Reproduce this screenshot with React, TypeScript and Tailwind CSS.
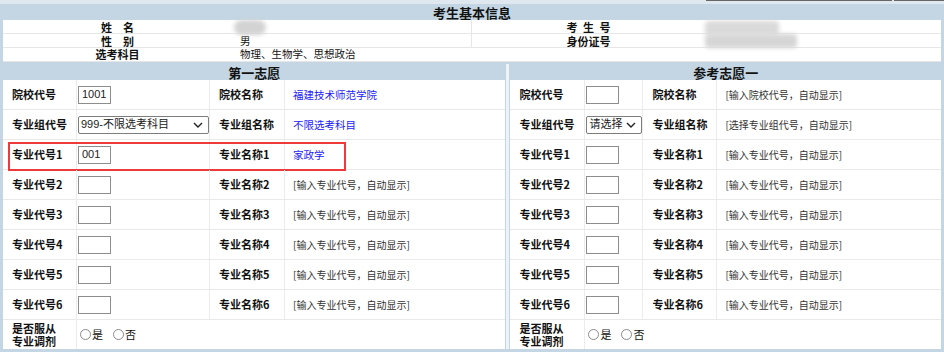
import type { ReactNode } from "react";

type Row = { label: string; field: ReactNode; label2: string; value: ReactNode; mark?: boolean };

function Box({ value }: { value?: string }) {
  return (
    <div className="ml-px flex h-[18px] w-[33px] items-center border border-[#8d8d8d] bg-white pl-[3px] font-['Liberation_Sans',sans-serif] text-[11px] text-[#222]">
      {value}
    </div>
  );
}

function Select({ text, w }: { text: string; w: string }) {
  return (
    <div className={`ml-px flex h-[18px] items-center justify-between rounded-[2px] border border-[#7d7d7d] bg-white pl-[2px] pr-[5px] text-[11px] text-[#222] ${w}`}>
      <span className="font-['Liberation_Sans','Noto_Sans_CJK_SC',sans-serif]">{text}</span>
      <svg width="10" height="6" viewBox="0 0 10 6">
        <path d="M1 1 L5 5 L9 1" fill="none" stroke="#222" strokeWidth="1.4" />
      </svg>
    </div>
  );
}

const Blue = ({ children }: { children: ReactNode }) => <span className="text-[10.5px] text-[#1a1aff]">{children}</span>;
const Hint = ({ children }: { children: ReactNode }) => <span className="text-[10px] text-[#333]">{children}</span>;

function Radio({ label }: { label: string }) {
  return (
    <span className="flex items-center">
      <span className="h-[11px] w-[11px] rounded-full border border-[#8a8a8a] bg-white" />
      <span className="ml-px text-[11px] leading-none">{label}</span>
    </span>
  );
}

const majors = [2, 3, 4, 5, 6];

const leftRows: Row[] = [
  { label: "院校代号", field: <Box value="1001" />, label2: "院校名称", value: <Blue>福建技术师范学院</Blue> },
  { label: "专业组代号", field: <Select text="999-不限选考科目" w="w-[131px]" />, label2: "专业组名称", value: <Blue>不限选考科目</Blue> },
  { label: "专业代号1", field: <Box value="001" />, label2: "专业名称1", value: <Blue>家政学</Blue>, mark: true },
  ...majors.map((n) => ({ label: `专业代号${n}`, field: <Box />, label2: `专业名称${n}`, value: <Hint>[输入专业代号，自动显示]</Hint> })),
];

const rightRows: Row[] = [
  { label: "院校代号", field: <Box />, label2: "院校名称", value: <Hint>[输入院校代号，自动显示]</Hint> },
  { label: "专业组代号", field: <Select text="请选择" w="w-[56px]" />, label2: "专业组名称", value: <Hint>[选择专业组代号，自动显示]</Hint> },
  ...[1, ...majors].map((n) => ({ label: `专业代号${n}`, field: <Box />, label2: `专业名称${n}`, value: <Hint>[输入专业代号，自动显示]</Hint> })),
];

function Panel({ title, rows, cols, width }: { title: string; rows: Row[]; cols: string; width: string }) {
  return (
    <div className={`flex flex-col ${width}`}>
      <div className="flex h-[16px] items-center justify-center text-[13px] font-bold leading-none">{title}</div>
      <div className="bg-white">
        {rows.map((r) => (
          <div key={r.label} className={`relative grid h-[30px] border-b border-[#e9e9e9] ${cols}`}>
            <div className="flex items-center border-r border-[#ececec] pl-[9px] text-[11px] font-bold">{r.label}</div>
            <div className="flex items-center border-r border-[#ececec]">{r.field}</div>
            <div className="flex items-center border-r border-[#ececec] pl-[9px] text-[11px] font-bold">{r.label2}</div>
            <div className="flex items-center pl-[8px]">{r.value}</div>
            {r.mark && <div className="absolute left-[5px] top-[2px] h-[29px] w-[338px] border-2 border-[#ee3a3a]" />}
          </div>
        ))}
        <div className={`grid h-[29px] ${cols}`}>
          <div className="flex flex-col justify-center border-r border-[#ececec] pl-[9px] text-[11px] font-bold leading-[13px]">
            <span>是否服从</span>
            <span>专业调剂</span>
          </div>
          <div className="col-span-3 flex items-center gap-[10px] pl-[3px]">
            <Radio label="是" />
            <Radio label="否" />
          </div>
        </div>
      </div>
    </div>
  );
}

export default function App() {
  return (
    <div className="h-[352px] w-[944px] overflow-hidden bg-[#c4d6e3] font-['Noto_Sans_CJK_SC',sans-serif] text-[#111]">
      <div className="flex h-[4px] bg-[#dfe8ef]">
        <div className="ml-[706px] h-px w-[186px] bg-[#666]" />
        <div className="ml-[2px] h-px flex-1 bg-[#666]" />
      </div>
      <div className="flex h-[16px] items-center justify-center text-[13px] font-bold leading-none">考生基本信息</div>
      <div className="mx-[3px] bg-white text-[11px] leading-none">
        <div className="grid h-[14px] grid-cols-[229px_240px_233px_1fr] border-b border-[#e6e6e6]">
          <div className="flex items-center justify-center font-bold">姓　名</div>
          <div className="flex items-center border-r border-[#e6e6e6] pl-[2px]">
            <div className="h-[15px] w-[32px] rounded-full bg-[#d3d3d3] blur-[2px]" />
          </div>
          <div className="flex items-center justify-center font-bold">考{"\u2002"}生{"\u2002"}号</div>
          <div className="flex items-center">
            <div className="h-[14px] w-[74px] rounded-sm bg-[#dadada] blur-[2px]" />
          </div>
        </div>
        <div className="grid h-[14px] grid-cols-[229px_240px_233px_1fr] border-b border-[#e6e6e6]">
          <div className="flex items-center justify-center font-bold">性　别</div>
          <div className="flex items-center border-r border-[#e6e6e6] pl-[8px] text-[10.5px]">男</div>
          <div className="flex items-center justify-center font-bold">身份证号</div>
          <div className="flex items-center">
            <div className="h-[14px] w-[92px] rounded-sm bg-[#d6d6d6] blur-[2px]" />
          </div>
        </div>
        <div className="grid h-[14px] grid-cols-[229px_1fr] border-b border-[#e6e6e6]">
          <div className="flex items-center justify-center font-bold">选考科目</div>
          <div className="flex items-center pl-[8px] text-[10.5px]">物理、生物学、思想政治</div>
        </div>
      </div>
      <div className="mt-[2px] flex px-[3px]">
        <Panel title="第一志愿" rows={leftRows} cols="grid-cols-[74px_133px_75px_1fr]" width="w-[503px]" />
        <div className="mx-px w-[3px] bg-[#eef3f7]" />
        <Panel title="参考志愿一" rows={rightRows} cols="grid-cols-[75px_58px_74px_1fr]" width="w-[431px]" />
      </div>
    </div>
  );
}
